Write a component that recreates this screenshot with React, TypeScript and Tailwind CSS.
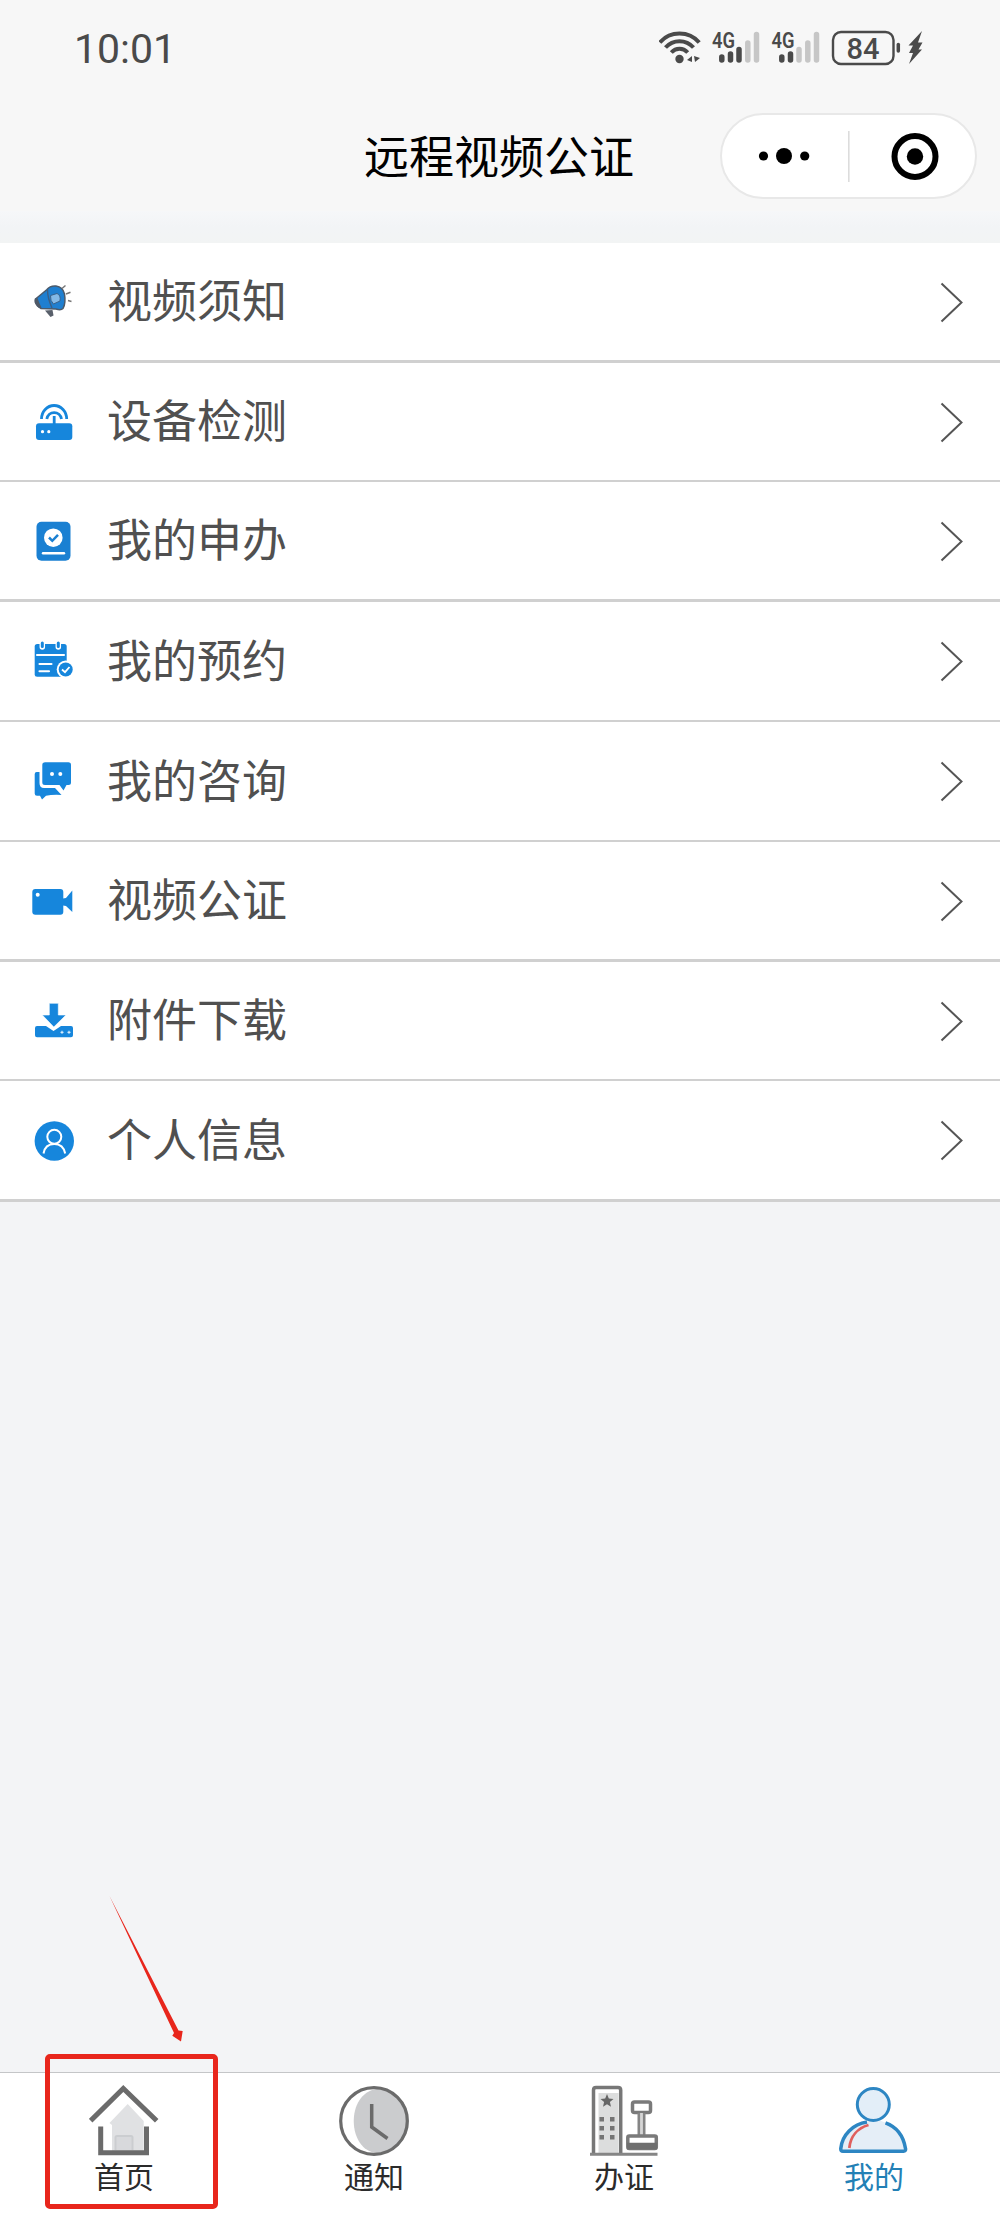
import React from "react";

const BLUE = "#1686dc";

const MegaphoneIcon = () => (
  <svg width="44" height="44" viewBox="0 0 44 44" fill="none">
    <path d="M13 30.500L18.500 37L21.500 35.500L20.500 30Z" fill="#59606b" />
    <path d="M3.500 19L15 9.500Q18 5.500 24 6Q31 7 32.500 14Q34 23 31 28.500Q29 30.500 24 29L9 28.500Q4 26 3.500 19Z" fill="#1f7fd0" stroke="#4b5a6b" strokeWidth="1.500" />
    <path d="M3 18.500Q1 22 5 26.500Q8 29.500 9.500 27.500Q7.500 24 5.500 18Z" fill="#4f5967" />
    <path d="M15.500 9.500Q15.500 18 20 28" stroke="#3b5f85" strokeWidth="1.400" />
    <path d="M18.500 15.500L25 13.500Q29 15 28 21L21.500 24Q18 21 18.500 15.500Z" fill="#84b9e6" stroke="#39618a" />
    <path d="M30 8.500L33.500 5.500M34 14L38.500 12.300M36 20.500L39.500 21.500" stroke="#777" strokeWidth="1.500" />
  </svg>
);

const RouterIcon = () => (
  <svg width="44" height="44" viewBox="0 0 44 44" fill="none">
    <rect x="4" y="23.300" width="36.300" height="16.700" rx="3" fill={BLUE} />
    <path d="M9.500 19A12.600 13.500 0 0 1 34.700 19" stroke={BLUE} strokeWidth="2.800" />
    <path d="M14.800 19A7.500 8 0 0 1 29.500 19M22.200 16V24" stroke={BLUE} strokeWidth="2.800" />
    <circle cx="10.500" cy="31.700" r="1.600" fill="#fff" />
    <circle cx="16.800" cy="31.700" r="1.600" fill="#fff" />
  </svg>
);

const CertificateIcon = () => (
  <svg width="44" height="44" viewBox="0 0 44 44" fill="none">
    <rect x="4.500" y="2.700" width="34" height="39" rx="5" fill="#1a80d2" />
    <circle cx="21.300" cy="18.700" r="9.300" fill="#fff" />
    <path d="M17 18.500L20.300 21.800L26 15.800" stroke="#1a80d2" strokeWidth="2.500" />
    <path d="M11 34.200H32" stroke="#fff" strokeWidth="2.400" strokeLinecap="round" />
  </svg>
);

const CalendarIcon = () => (
  <svg width="44" height="44" viewBox="0 0 44 44" fill="none">
    <rect x="2.700" y="5" width="32" height="32.700" rx="2.500" fill={BLUE} />
    <path d="M10.300 3V8M26.300 3V8" stroke="#fff" strokeWidth="5.500" strokeLinecap="round" />
    <path d="M10.300 4V7.500M26.300 4V7.500" stroke={BLUE} strokeWidth="3" strokeLinecap="round" />
    <path d="M5 16H32M7.500 25H19.500M7.500 32.300H17" stroke="#fff" strokeWidth="2.100" strokeLinecap="round" />
    <circle cx="33.700" cy="30.500" r="9" fill="#fff" />
    <circle cx="33.700" cy="30.500" r="7" fill={BLUE} />
    <path d="M30 30.500L33 33.200L37.500 28" stroke="#fff" strokeWidth="1.800" />
  </svg>
);

const ChatIcon = () => (
  <svg width="44" height="44" viewBox="0 0 44 44" fill="none">
    <path d="M4.700 13H7.500V24Q7.500 29 12 29H23L29.500 36Q20 35.500 14 36.800L10 40.500L8 36.800H5Q2.700 36.800 2.700 34.500V15Q2.700 13 4.700 13Z" fill={BLUE} />
    <path d="M13 3.300H36.500Q39 3.300 39 6V23.500Q39 26 36.500 26H34.500L31.500 31.500L27.500 26H13Q10.300 26 10.300 23.500V6Q10.300 3.300 13 3.300Z" fill={BLUE} />
    <circle cx="20" cy="15" r="2" fill="#fff" />
    <circle cx="28.300" cy="15" r="2" fill="#fff" />
  </svg>
);

const CameraIcon = () => (
  <svg width="44" height="44" viewBox="0 0 44 44" fill="none">
    <rect x="0.300" y="10" width="31" height="25.700" rx="3" fill={BLUE} />
    <path d="M31 19.500L34 19L40.300 11.500V33L34 27L31 26.500Z" fill={BLUE} />
    <circle cx="5.700" cy="15.700" r="2" fill="#fff" />
  </svg>
);

const DownloadIcon = () => (
  <svg width="44" height="44" viewBox="0 0 44 44" fill="none">
    <path d="M5 27H14L21.500 32L29 27H39Q41 27 41 29V36.300Q41 38.300 39 38.300H5Q3 38.300 3 36.300V29Q3 27 5 27Z" fill={BLUE} />
    <path d="M17.300 4.300H26.300V16H34L21.800 28L10.300 16H17.300Z" fill={BLUE} stroke="#fff" strokeWidth="0.600" />
    <path d="M28.500 33.300H31.500M30 31.800V34.800M35.500 33.300H38.500M37 31.800V34.800" stroke="#d6ebfb" strokeWidth="1.200" />
  </svg>
);

const ProfileIcon = () => (
  <svg width="44" height="44" viewBox="0 0 44 44" fill="none">
    <circle cx="22.300" cy="23" r="19.700" fill={BLUE} />
    <circle cx="22.300" cy="18.800" r="7" stroke="#fff" strokeWidth="2" />
    <path d="M11.500 35.500C12.500 29.500 16 26 22.300 26C28.500 26 32 29.500 33.200 35.500" stroke="#fff" strokeWidth="2" />
  </svg>
);

const HomeTabIcon = () => (
  <svg width="72" height="72" viewBox="0 0 72 72" fill="none">
    <path d="M38.700 20L54.700 37V67H23V41L20.500 39Z" fill="#e0e1e3" />
    <path d="M26.500 66V53.500Q26.500 52 28 52H42Q43.500 52 43.500 53.500V66" fill="#d8d9dc" stroke="#cbcdd0" strokeWidth="2" />
    <path d="M1.700 36.700L34.300 4.500L67.700 36.700" stroke="#6b6b6b" strokeWidth="5" />
    <path d="M11.700 42.500V68.700H57.500V42.500" stroke="#6b6b6b" strokeWidth="5" />
  </svg>
);

const ClockTabIcon = () => (
  <svg width="72" height="72" viewBox="0 0 72 72" fill="none">
    <circle cx="35" cy="37" r="33" fill="#fff" />
    <path d="M38 5A32 32 0 0 1 38 69C8 67 6 9 38 5Z" fill="#cbccce" />
    <circle cx="35" cy="37" r="33.300" stroke="#6b6b6b" strokeWidth="3.200" />
    <path d="M32.700 20V43L48.500 54.500" stroke="#6b6b6b" strokeWidth="3.500" />
  </svg>
);

const OfficeTabIcon = () => (
  <svg width="72" height="72" viewBox="0 0 72 72" fill="none">
    <rect x="9.500" y="9" width="20" height="60" fill="#dcdddd" />
    <path d="M4.500 70V6Q4.500 3.500 7 3.500H29Q31.700 3.500 31.700 6V70" stroke="#777" strokeWidth="3.500" />
    <path d="M1 70.300H68.500" stroke="#858585" strokeWidth="3" />
    <path d="M18 10L19.800 14.600L24.500 15L20.900 18L22 22.700L18 20.200L14 22.700L15.100 18L11.500 15L16.200 14.600Z" fill="#666" />
    <path d="M10.500 35.300H15M21 35.300H25.500M10.500 44.300H15M21 44.300H25.500M10.500 53.300H15M21 53.300H25.500" stroke="#747474" strokeWidth="4.500" />
    <rect x="43.500" y="18" width="18" height="10.500" rx="2" stroke="#7a7a7a" strokeWidth="3.500" />
    <path d="M52.500 29V51" stroke="#d6d6d6" strokeWidth="3" />
    <path d="M49.800 29V51M55.200 29V51" stroke="#858585" strokeWidth="2.600" />
    <rect x="38.800" y="52" width="28.500" height="12.500" rx="1.500" stroke="#7a7a7a" strokeWidth="3.500" />
    <path d="M38 62H68" stroke="#6f6f6f" strokeWidth="6.500" />
  </svg>
);

const MineTabIcon = () => (
  <svg width="72" height="72" viewBox="0 0 72 72" fill="none">
    <path d="M3 66C4 52 14 40 30 37H42C56 41 64 52 67 66Z" fill="#e5eef7" />
    <circle cx="34.300" cy="20.500" r="16" fill="#e3eef8" stroke="#2d86c3" strokeWidth="3" />
    <path d="M28 38C14 40 3 51 1.800 64.500Q1.600 67.300 4 67.300H64.500Q67 67.300 66.500 64.500C64.500 52 58 43 46.500 38.800" stroke="#2d86c3" strokeWidth="3.500" />
    <path d="M29.500 41C19 44 11.500 52 10.300 64" stroke="#e0605e" strokeWidth="2.800" />
  </svg>
);

const menu = [
  { label: "视频须知", icon: <MegaphoneIcon />, size: "h-[120px] border-b-[3px]" },
  { label: "设备检测", icon: <RouterIcon />, size: "h-[119px] border-b-2" },
  { label: "我的申办", icon: <CertificateIcon />, size: "h-[120px] border-b-[3px]" },
  { label: "我的预约", icon: <CalendarIcon />, size: "h-[120px] border-b-2" },
  { label: "我的咨询", icon: <ChatIcon />, size: "h-[120px] border-b-2" },
  { label: "视频公证", icon: <CameraIcon />, size: "h-[120px] border-b-[3px]" },
  { label: "附件下载", icon: <DownloadIcon />, size: "h-[119px] border-b-2" },
  { label: "个人信息", icon: <ProfileIcon />, size: "h-[121px] border-b-[3px]" },
];

const tabs = [
  { label: "首页", icon: <HomeTabIcon />, color: "text-[#2b2b2b]" },
  { label: "通知", icon: <ClockTabIcon />, color: "text-[#2b2b2b]" },
  { label: "办证", icon: <OfficeTabIcon />, color: "text-[#2b2b2b]" },
  { label: "我的", icon: <MineTabIcon />, color: "text-[#2380b5]" },
];

const StatusIcons = () => (
  <svg width="270" height="40" viewBox="0 0 270 40" fill="none">
    {/* wifi */}
    <g stroke="#4a4a4a" strokeWidth="4">
      <path d="M0.800 15.500C11 3.500 30 3.500 40.200 15.500" />
      <path d="M6.500 20.500C14 12 27 12 34.500 20.500" />
      <path d="M12.300 25.500C17 20.500 24 20.500 28.700 25.500" />
    </g>
    <circle cx="20.500" cy="32" r="4.200" fill="#4a4a4a" />
    <path d="M28 33L33 29V35ZM35 29L41 31L36 35Z" fill="#4a4a4a" />
    {/* signal 1 */}
    <text x="53" y="20.500" fontSize="21.500" fontWeight="600" fill="#4a4a4a" textLength="23" lengthAdjust="spacingAndGlyphs">4G</text>
    <g strokeWidth="5.500" strokeLinecap="round">
      <path d="M62.800 30V33M71.500 27V33M80 22.500V33" stroke="#4a4a4a" />
      <path d="M88.800 16V33M97.500 7.500V33" stroke="#c6c6c6" />
    </g>
    {/* signal 2 */}
    <text x="112.500" y="20.500" fontSize="21.500" fontWeight="600" fill="#4a4a4a" textLength="23" lengthAdjust="spacingAndGlyphs">4G</text>
    <g strokeWidth="5.500" strokeLinecap="round">
      <path d="M122.800 30V33M131.500 27V33" stroke="#4a4a4a" />
      <path d="M140 22.500V33M148.800 16V33M157.500 7.500V33" stroke="#c6c6c6" />
    </g>
    {/* battery */}
    <rect x="174" y="5" width="60.500" height="32" rx="8" stroke="#4a4a4a" strokeWidth="2.400" />
    <text x="187.500" y="32" fontSize="30" fontWeight="500" fill="#4a4a4a" textLength="33" lengthAdjust="spacingAndGlyphs">84</text>
    <path d="M239.300 17.500V24" stroke="#4a4a4a" strokeWidth="3.500" strokeLinecap="round" />
    <path d="M263 4L249.500 18.500H254L250 26H254L250 37L263 22.500H259.500L263.500 15.500H259Z" fill="#4a4a4a" />
  </svg>
);

const App: React.FC = () => {
  return (
    <div
      className="relative flex flex-col w-[1000px] h-[2213px] overflow-hidden bg-[#f3f4f6]"
      style={{ fontFamily: "'Noto Sans CJK SC', sans-serif" }}
    >
      {/* Header */}
      <header className="h-[211px] bg-[#f7f7f7]">
        <div
          className="flex justify-between h-[98px] pl-[74px] pr-[71px] pt-[27px] text-[#4a4a4a]"
          style={{ fontFamily: "Roboto, sans-serif" }}
        >
          <span className="text-[41px] leading-[44px]">10:01</span>
          <StatusIcons />
        </div>
        <div className="grid grid-cols-[364px_271px_1fr] h-[116px] items-center">
          <span />
          <h1 className="pb-[3px] text-[45px] leading-none font-normal text-black whitespace-nowrap">远程视频公证</h1>
          <div className="flex items-center justify-self-end w-[257px] h-[86px] mr-[23px] rounded-full bg-white border-2 border-[#e8e8e8]">
            <svg width="253" height="82" viewBox="0 0 253 82">
              <circle cx="41.500" cy="41" r="4.600" />
              <circle cx="62" cy="41" r="8" />
              <circle cx="82.700" cy="41" r="4.600" />
              <rect x="126" y="16" width="1.600" height="51" fill="#dcdcdc" />
              <circle cx="193" cy="41.500" r="20.500" fill="none" stroke="#000" strokeWidth="6" />
              <circle cx="193" cy="41.500" r="8.200" />
            </svg>
          </div>
        </div>
      </header>

      {/* Menu list */}
      <main className="flex-1">
        <div className="h-8 bg-gradient-to-b from-[#f6f7f9] via-[#f2f4f6] to-[#f2f4f4]" />
        {menu.map((item) => (
          <div
            key={item.label}
            className={`flex items-center pl-8 pr-[36px] bg-white border-[#d0d0d0] ${item.size}`}
          >
            {item.icon}
            <span className="flex-1 ml-[31px] pb-[6px] text-[45px] leading-none text-[#505050]">{item.label}</span>
            <svg width="24" height="42" viewBox="0 0 24 42" fill="none">
              <path d="M1.500 2.500L21.500 21.500L1.500 40.500" stroke="#555" strokeWidth="2" />
            </svg>
          </div>
        ))}
      </main>

      {/* Tab bar */}
      <nav className="grid grid-cols-4 h-[141px] border-t border-[#c4c6c8] bg-white">
        {tabs.map((tab) => (
          <div key={tab.label} className={`flex flex-col items-center pt-[11px] pr-px ${tab.color}`}>
            {tab.icon}
            <span className="mt-1 mr-px text-[30px] leading-none">{tab.label}</span>
          </div>
        ))}
      </nav>

      {/* Pointer to the home tab */}
      <svg className="absolute left-[100px] top-[1885px]" width="100" height="165" viewBox="0 0 100 165">
        <path d="M9.500 11L74 148L72.300 150.700L81 156.500L82.700 146L78.500 145.500Z" fill="#e8261c" />
      </svg>
      <div className="absolute left-[45px] top-[2054px] w-[173px] h-[155px] rounded-[5px] border-[5px] border-[#e8261c]" />
    </div>
  );
};

export default App;
